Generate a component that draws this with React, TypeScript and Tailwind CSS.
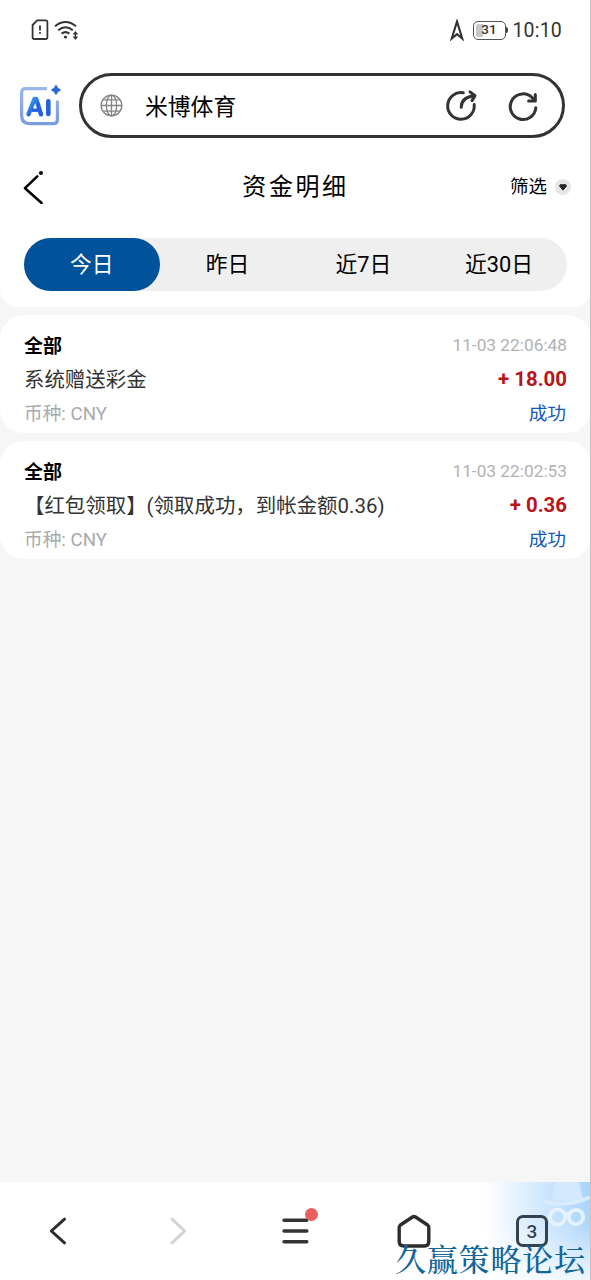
import { useState } from "react";

type FundRecord = {
  id: number;
  title: string;
  time: string;
  detail: string;
  amount: string;
  currency: string;
  status: string;
};

const TABS = ["今日", "昨日", "近7日", "近30日"];

const RECORDS: FundRecord[] = [
  {
    id: 1,
    title: "全部",
    time: "11-03 22:06:48",
    detail: "系统赠送彩金",
    amount: "+ 18.00",
    currency: "CNY",
    status: "成功",
  },
  {
    id: 2,
    title: "全部",
    time: "11-03 22:02:53",
    detail: "【红包领取】(领取成功，到帐金额0.36)",
    amount: "+ 0.36",
    currency: "CNY",
    status: "成功",
  },
];

function StatusBar() {
  return (
    <div className="flex h-[60px] items-center justify-between pl-[31px] pr-[29px]">
      <div className="flex items-center gap-[5px]">
        <svg width="18" height="22" viewBox="0 0 18 22" fill="none" stroke="#333" strokeWidth="1.8">
          <path d="M6.2 1.4H14.6Q16.4 1.4 16.4 3.2V18.2Q16.4 20 14.6 20H3.4Q1.6 20 1.6 18.2V6Z" strokeLinejoin="round" />
          <path d="M9 6.5V11.6M9 13V14.8" />
        </svg>
        <svg width="26" height="22" viewBox="0 0 26 22" fill="none" stroke="#333" strokeWidth="2">
          <path d="M1 7.2Q11.5 -1.2 22 7.2M4.2 11.2Q11.5 5.4 18.8 11.2M7.6 14.6Q11.5 11.6 15.4 14.6" />
          <circle cx="11.5" cy="18" r="1.6" fill="#333" stroke="none" />
          <path d="M21.4 12L24.2 15.6H18.6ZM21.4 21L24.2 17.4H18.6Z" fill="#333" stroke="none" />
          <path d="M21.4 14V19" strokeWidth="1.4" />
        </svg>
      </div>
      <div className="flex items-center">
        <svg className="mr-[9px]" width="14" height="22" viewBox="0 0 14 22" fill="none" stroke="#333" strokeWidth="2.1">
          <path d="M7 2.5L1.8 19.5L7 15.2L12.2 19.5Z" />
        </svg>
        <div className="relative flex h-[19px] w-[33px] items-center justify-center rounded-[5px] border-[1.5px] border-[#555]">
          <span className="absolute left-[2px] top-[2px] h-[13px] w-[7px] rounded-l-[2px] bg-[#c8c8c8]" />
          <span className="relative -ml-[2px] text-[13.5px] font-medium leading-none text-[#333]">31</span>
          <span className="absolute -right-[3px] top-[5px] h-[6px] w-[2px] rounded-r bg-[#444]" />
        </div>
        <span className="ml-[6px] pt-[2px] text-[19.5px] leading-none tracking-[0.2px] text-[#333]">10:10</span>
      </div>
    </div>
  );
}

function AiLogo() {
  return (
    <svg width="44" height="43" viewBox="0 0 44 43" fill="none">
      <defs>
        <linearGradient id="frame" x1="0" y1="0" x2="0" y2="1">
          <stop offset="0" stopColor="#9bb5ee" />
          <stop offset="1" stopColor="#7c9ce0" />
        </linearGradient>
        <linearGradient id="letters" x1="0" y1="0" x2="1" y2="1">
          <stop offset="0" stopColor="#49a5ee" />
          <stop offset="0.6" stopColor="#2063dc" />
        </linearGradient>
      </defs>
      <path
        d="M29 4.6H7.5Q3.6 4.6 3.6 8.5V31.5Q3.6 39.6 11.5 39.6H35.5Q39.4 39.6 39.4 35.7V16.5"
        stroke="url(#frame)"
        strokeWidth="3.2"
      />
      <path d="M10.5 30.3L16.4 15H18.2L23 30.3" stroke="url(#letters)" strokeWidth="4.4" strokeLinecap="round" strokeLinejoin="round" />
      <path d="M14 26.2H21" stroke="#2063dc" strokeWidth="3.4" />
      <path d="M30.3 17.4V30" stroke="#2462de" strokeWidth="4.6" strokeLinecap="round" />
      <path d="M38 1.4Q38.8 5 42.4 5.9Q38.8 6.8 38 10.4Q37.2 6.8 33.6 5.9Q37.2 5 38 1.4Z" fill="#2668d6" stroke="#2668d6" strokeWidth="1.4" />
    </svg>
  );
}

function AddressBar() {
  return (
    <div className="flex h-[91px] items-center pl-[18px]">
      <AiLogo />
      <div className="ml-[17px] flex h-[65px] w-[486px] items-center rounded-full border-[3px] border-[#333] pl-[18px]">
        <svg width="23" height="23" viewBox="0 0 24 24" fill="none" stroke="#858585" strokeWidth="1.4">
          <circle cx="12" cy="12" r="10.8" />
          <ellipse cx="12" cy="12" rx="5.4" ry="10.8" />
          <path d="M12 1.2V22.8M1.2 12H22.8M3.4 6.2H20.6M3.4 17.8H20.6" />
        </svg>
        <span className="ml-[22px] flex-1 pt-[5px] text-[22.8px] leading-none text-black">米博体育</span>
        <svg width="34" height="34" viewBox="0 0 34 34" fill="none" stroke="#333" strokeWidth="3" strokeLinecap="round">
          <path d="M19.3 3.8A13.3 13.3 0 1 0 30.2 15.5" />
          <path d="M17.2 18.2C17.2 12.4 21 7.9 30.3 6.8M26 2.9L31 6.8L28 11.6" strokeLinejoin="round" />
        </svg>
        <svg className="ml-[28px] mr-[22px]" width="34" height="34" viewBox="0 0 34 34" fill="none" stroke="#333" strokeWidth="3" strokeLinecap="round">
          <path d="M29.8 18.8A12.8 12.8 0 1 1 26.4 8.9L29 11.4" />
          <path d="M29.3 5.4V12.1H22.6" strokeLinejoin="round" />
        </svg>
      </div>
    </div>
  );
}

function RecordCard({ record }: { record: FundRecord }) {
  return (
    <div className="h-[118px] rounded-[24px] bg-white px-6 pt-[14px]">
      <div className="flex h-[34px] items-center justify-between">
        <span className="pt-[2px] text-[19px] font-bold text-black">{record.title}</span>
        <span className="text-[17.3px] text-[#b2b2b2]">{record.time}</span>
      </div>
      <div className="flex h-[34px] items-center justify-between">
        <span className="pt-px text-[20.45px] text-[#333]">{record.detail}</span>
        <span className="pb-px text-[20.4px] font-bold text-[#b8141b]">{record.amount}</span>
      </div>
      <div className="flex h-[34px] items-center justify-between">
        <span className="text-[18.7px] text-[#aaa]">币种: {record.currency}</span>
        <span className="pr-px pt-px text-[18.7px] text-[#1658b8]">{record.status}</span>
      </div>
    </div>
  );
}

function BottomBar() {
  return (
    <div className="relative h-[98px] overflow-hidden bg-white">
      {/* incognito artwork fading in from the right */}
      <div className="absolute right-0 top-0 h-full w-[106px] bg-linear-to-r from-white to-[#a9d4fb]" />
      <div className="absolute right-0 top-0 h-full w-[106px] bg-linear-to-b from-transparent from-40% to-white/80" />
      <svg className="absolute right-0 top-0" width="50" height="50" viewBox="0 0 50 50" fill="none">
        <path d="M15 0H38L42 17Q28 21 11 18Z" fill="#d3e9fd" />
        <path d="M4 20Q26 25 47 16" stroke="#d9ecfd" strokeWidth="4" strokeLinecap="round" />
        <circle cx="16.5" cy="35" r="7.6" stroke="#e6f2fd" strokeWidth="3.8" />
        <circle cx="35" cy="35" r="7.2" stroke="#e6f2fd" strokeWidth="3.8" />
        <path d="M23 33Q26 30 29 33" stroke="#e6f2fd" strokeWidth="3" />
      </svg>
      <div className="relative flex h-full items-center">
        <div className="flex flex-1 justify-center">
          <svg className="-ml-[2px]" width="18" height="28" viewBox="0 0 18 28" fill="none" stroke="#2d2d2d" strokeWidth="3" strokeLinecap="round" strokeLinejoin="round">
            <path d="M15.5 2.2L2.3 14L15.5 25.8" />
          </svg>
        </div>
        <div className="flex flex-1 justify-center">
          <svg className="ml-[2px]" width="18" height="28" viewBox="0 0 18 28" fill="none" stroke="#d3d3d3" strokeWidth="3" strokeLinecap="round" strokeLinejoin="round">
            <path d="M3 2.2L15.7 14L3 25.8" />
          </svg>
        </div>
        <div className="flex flex-1 justify-center">
          <div className="relative">
            <svg width="28" height="28" viewBox="0 0 28 28" stroke="#333" strokeWidth="3.4" strokeLinecap="round">
              <path d="M2 3.3H24.8M2 14H24.8M2 24.7H24.8" />
            </svg>
            <span className="absolute -right-[8px] -top-[9px] size-[13px] rounded-full bg-[#e9605c]" />
          </div>
        </div>
        <div className="flex flex-1 justify-center">
          <svg width="34" height="34" viewBox="0 0 34 34" fill="none" stroke="#2d2d2d" strokeWidth="3.4" strokeLinejoin="round">
            <path d="M15.5 3L3.4 11Q2.2 12 2.2 13.5V27.5Q2.2 32 6.7 32H27.3Q31.8 32 31.8 27.5V13.5Q31.8 12 30.6 11L18.5 3Q17 2 15.5 3Z" />
          </svg>
        </div>
        <div className="flex flex-1 justify-center">
          <div className="flex size-[32px] items-center justify-center rounded-[7px] border-[3px] border-[#34424e] text-[19px] font-medium leading-none text-[#34424e]">
            3
          </div>
        </div>
      </div>
      <div className="absolute bottom-[4px] left-[395px] whitespace-nowrap font-['KaiTi','Noto_Serif_CJK_SC','Noto_Sans_CJK_SC',serif] text-[31px] font-medium leading-[36px] tracking-[0.8px] text-[#12669a]">
        久赢策略论坛
      </div>
    </div>
  );
}

export default function App() {
  const [activeTab, setActiveTab] = useState(0);

  return (
    <div className="relative flex h-[1280px] w-[591px] flex-col overflow-hidden bg-[#f6f6f6] font-['Roboto','Noto_Sans_CJK_SC',sans-serif]">
      <div className="rounded-b-[18px] bg-white pb-4">
        <StatusBar />
        <AddressBar />

        <div className="grid h-[71px] grid-cols-3 items-center pl-[23px] pr-[20px]">
          <svg width="22" height="34" viewBox="0 0 22 34" fill="none" stroke="#000" strokeWidth="2.5" strokeLinecap="round">
            <path d="M14.3 6.3L2 18.2L18.6 33" strokeLinejoin="round" />
            <circle cx="18" cy="3" r="0.8" fill="#000" />
          </svg>
          <h1 className="pr-[3px] pt-px text-center text-[24px] leading-none tracking-[2.6px] text-black">资金明细</h1>
          <button className="flex items-center justify-end gap-2 text-[18.5px] leading-none text-black">
            <span className="pt-[2px]">筛选</span>
            <svg width="16" height="16" viewBox="0 0 16 16">
              <circle cx="8" cy="8" r="8" fill="#e6e6e6" />
              <path d="M5 5.8H11L11.3 7.2L8 11.2L4.7 7.2Z" fill="#222" stroke="#222" strokeLinejoin="round" />
            </svg>
          </button>
        </div>

        <div className="mx-6 mt-4 grid h-[53px] grid-cols-4 rounded-full bg-[#efefef]">
          {TABS.map((tab, i) => (
            <button
              key={tab}
              onClick={() => setActiveTab(i)}
              className={`rounded-full pt-px text-[21.8px] ${
                activeTab === i ? "bg-[#00529b] text-white" : "text-black"
              }`}
            >
              {tab}
            </button>
          ))}
        </div>
      </div>

      <div className="mt-2 flex flex-1 flex-col gap-2">
        {RECORDS.map((record) => (
          <RecordCard key={record.id} record={record} />
        ))}
      </div>

      <BottomBar />
      <div className="absolute right-0 top-0 h-full w-px bg-[#c4c4c4]" />
    </div>
  );
}
